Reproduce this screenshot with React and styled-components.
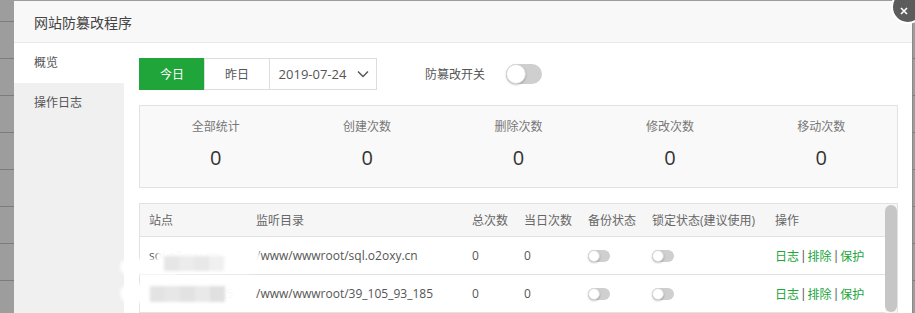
import React from "react";
import styled, { createGlobalStyle } from "styled-components";

const Global = createGlobalStyle`
  html, body { margin: 0; padding: 0; }
  body {
    width: 915px; height: 313px; overflow: hidden;
    background-color: #9d9d9d;
    background-image: repeating-linear-gradient(to bottom, transparent 0, transparent 21px, #7c7c7c 21px, #7c7c7c 22px, transparent 22px, transparent 37px);
    background-position: 0 0;
    font-family: "Open Sans", "Noto Sans CJK SC", sans-serif;
  }
  #root { height: 313px; }
`;

const FONT = `"Open Sans", "Noto Sans CJK SC", sans-serif`;

const Page = styled.div`
  display: flex;
  height: 313px;
  padding: 1px 0 0 14px;
  box-sizing: border-box;
`;

const Dialog = styled.div`
  position: relative;
  width: 898px;
  height: 312px;
  background: #fff;
  display: flex;
  flex-direction: column;
  border-right: 1px solid #8a8a8a;
  font-family: ${FONT};
`;

const TitleBar = styled.div`
  height: 41px;
  flex: none;
  background: #f8f8f8;
  border-bottom: 1px solid #e9e9e9;
  display: flex;
  align-items: center;
  padding-left: 20px;
  font-size: 14px;
  color: #444;
`;

const Close = styled.div`
  position: absolute;
  right: -12px;
  top: -11px;
  width: 22px;
  height: 22px;
  border-radius: 50%;
  background: #5c5c5c;
  border: 2px solid #fff;
  display: flex;
  align-items: center;
  justify-content: center;
  padding-top: 8px;
  padding-right: 7px;
  box-sizing: content-box;
`;

const Body = styled.div`
  flex: 1;
  display: flex;
  min-height: 0;
  position: relative;
`;

const Side = styled.div`
  width: 110px;
  flex: none;
  background: #f0f0f0;
`;

const NavItem = styled.div`
  height: 40px;
  line-height: 40px;
  padding-left: 20px;
  font-size: 12px;
  color: #555;
  background: ${(p) => (p.$active ? "#fff" : "transparent")};
`;

const Main = styled.div`
  flex: 1;
  padding: 15px 14px 0 15px;
  display: flex;
  flex-direction: column;
  gap: 15px;
  min-width: 0;
`;

const Toolbar = styled.div`
  display: flex;
  align-items: center;
  height: 32px;
`;

const Tabs = styled.div`
  display: flex;
  height: 32px;
`;

const Tab = styled.div`
  width: ${(p) => p.$w}px;
  box-sizing: border-box;
  display: flex;
  align-items: center;
  justify-content: center;
  gap: 11px;
  font-size: ${(p) => (p.$date ? 13 : 12)}px;
  color: ${(p) => (p.$active ? "#fff" : "#555")};
  background: ${(p) => (p.$active ? "#20a53a" : "#fff")};
  border: 1px solid ${(p) => (p.$active ? "#20a53a" : "#ddd")};
  margin-left: ${(p) => (p.$first ? 0 : -1)}px;
  padding-left: ${(p) => (p.$date ? 2 : 0)}px;
`;

const SwitchLabel = styled.span`
  font-size: 12px;
  color: #555;
  margin-left: 48px;
  margin-right: 21px;
`;

const Switch = styled.div`
  position: relative;
  width: ${(p) => (p.$small ? 22 : 36)}px;
  height: ${(p) => (p.$small ? 12 : 20)}px;
  border-radius: 20px;
  background: #cfcfcf;
  flex: none;
  &::after {
    content: "";
    position: absolute;
    left: 0;
    top: 0;
    width: ${(p) => (p.$small ? 12 : 20)}px;
    height: ${(p) => (p.$small ? 12 : 20)}px;
    border-radius: 50%;
    background: #fff;
    box-sizing: border-box;
    border: 1px solid #d8d8d8;
    box-shadow: 0 1px 2px rgba(0,0,0,0.25);
  }
`;

const Stats = styled.div`
  height: 83px;
  box-sizing: border-box;
  border: 1px solid #e2e2e2;
  background: #f9f9f9;
  display: grid;
  grid-template-columns: repeat(5, 1fr);
  padding-top: 11px;
`;

const Stat = styled.div`
  display: flex;
  flex-direction: column;
  align-items: center;
`;

const StatLabel = styled.div`
  font-size: 12px;
  line-height: 20px;
  color: #777;
`;

const StatValue = styled.div`
  font-size: 20px;
  line-height: 30px;
  margin-top: 6px;
  color: #333;
`;

const TableBox = styled.div`
  flex: 1;
  border: 1px solid #e2e2e2;
  border-bottom: none;
  display: flex;
  min-height: 0;
  position: relative;
`;

const Table = styled.div`
  flex: 1;
  display: grid;
  grid-template-columns: 107px 216px 52px 64px 64px 123px 1fr;
  grid-auto-rows: 38px;
  grid-template-rows: 33px;
  align-content: start;
`;

const Cell = styled.div`
  display: flex;
  align-items: center;
  padding-left: 9px;
  font-size: 12px;
  color: ${(p) => (p.$head ? "#666" : "#555")};
  background: ${(p) => (p.$head ? "#f6f6f6" : "#fff")};
  border-bottom: 1px solid #e2e2e2;
  white-space: nowrap;
  gap: 1px;
`;

const Link = styled.span`
  color: #20a53a;
`;

const Sep = styled.span`
  color: #444;
`;

const ScrollTrack = styled.div`
  width: 12px;
  flex: none;
  background: #f6f6f6;
  padding: 1px 0;
  display: flex;
`;

const Thumb = styled.div`
  flex: 1;
  border-radius: 6px;
  background: #c6c6c6;
`;

const Blur = styled.div`
  position: absolute;
  left: ${(p) => p.$x}px;
  top: ${(p) => p.$y}px;
  width: ${(p) => p.$w}px;
  height: ${(p) => p.$h}px;
  border-radius: ${(p) => p.$h / 2}px;
  background: rgba(255,255,255,0.96);
  filter: blur(1.5px);
  display: flex;
  align-items: center;
  padding-left: ${(p) => p.$pad}px;
  box-sizing: border-box;
`;

const Block = styled.div`
  width: 15px;
  height: ${(p) => p.$h}px;
  background: ${(p) => p.$c};
  margin-top: ${(p) => p.$mt}px;
`;

const Chevron = () => (
  <svg width="12" height="8" viewBox="0 0 12 8">
    <polyline points="1,1.5 6,6.5 11,1.5" fill="none" stroke="#555" strokeWidth="1.4" />
  </svg>
);

const rows = [
  { site: "sql.o2oxy.cn", dir: "/www/wwwroot/sql.o2oxy.cn" },
  { site: "39_105_93_185", dir: "/www/wwwroot/39_105_93_185" },
];

const stats = ["全部统计", "创建次数", "删除次数", "修改次数", "移动次数"];
const heads = ["站点", "监听目录", "总次数", "当日次数", "备份状态", "锁定状态(建议使用)", "操作"];

export default function App() {
  return (
    <>
      <Global />
      <Page>
        <Dialog>
          <TitleBar>网站防篡改程序</TitleBar>
          <Close>
            <svg width="8" height="8" viewBox="0 0 8 8">
              <path d="M1 1L7 7M7 1L1 7" stroke="#fff" strokeWidth="1.6" />
            </svg>
          </Close>
          <Body>
            <Side>
              <NavItem $active>概览</NavItem>
              <NavItem>操作日志</NavItem>
            </Side>
            <Main>
              <Toolbar>
                <Tabs>
                  <Tab $w={66} $active $first>今日</Tab>
                  <Tab $w={66}>昨日</Tab>
                  <Tab $w={108} $date>
                    2019-07-24 <Chevron />
                  </Tab>
                </Tabs>
                <SwitchLabel>防篡改开关</SwitchLabel>
                <Switch />
              </Toolbar>
              <Stats>
                {stats.map((s) => (
                  <Stat key={s}>
                    <StatLabel>{s}</StatLabel>
                    <StatValue>0</StatValue>
                  </Stat>
                ))}
              </Stats>
              <TableBox>
                <Table>
                  {heads.map((h) => (
                    <Cell $head key={h}>{h}</Cell>
                  ))}
                  {rows.map((r) => (
                    <React.Fragment key={r.dir}>
                      <Cell>{r.site}</Cell>
                      <Cell>{r.dir}</Cell>
                      <Cell>0</Cell>
                      <Cell>0</Cell>
                      <Cell><Switch $small /></Cell>
                      <Cell><Switch $small /></Cell>
                      <Cell>
                        <Link>日志</Link><Sep>|</Sep><Link>排除</Link><Sep>|</Sep><Link>保护</Link>
                      </Cell>
                    </React.Fragment>
                  ))}
                </Table>
                <ScrollTrack>
                  <Thumb />
                </ScrollTrack>
              </TableBox>
            </Main>
            <Blur $x={106} $y={216} $w={60} $h={16} $pad={0} />
            <Blur $x={143} $y={198} $w={103} $h={33} $pad={7}>
              <Block $h={15} $c="#e6e6e6" $mt={12} />
              <Block $h={15} $c="#ececec" $mt={12} />
              <Block $h={15} $c="#e8e8e8" $mt={12} />
              <Block $h={15} $c="#f0f0f0" $mt={12} />
            </Blur>
            <Blur $x={106} $y={241} $w={124} $h={19} $pad={30}>
              <Block $h={16} $c="#e3e3e3" $mt={0} />
              <Block $h={16} $c="#e7e7e7" $mt={0} />
              <Block $h={16} $c="#e2e2e2" $mt={0} />
              <Block $h={16} $c="#e9e9e9" $mt={0} />
              <Block $h={16} $c="#e0e0e0" $mt={0} />
            </Blur>
          </Body>
        </Dialog>
      </Page>
    </>
  );
}
